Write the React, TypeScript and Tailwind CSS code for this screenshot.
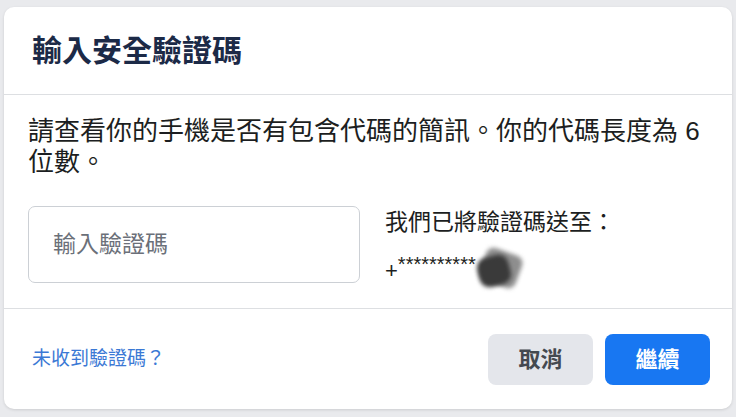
export default function App() {
  return (
    <div
      className="min-h-[417px] w-[736px] bg-[#e9eaed] pt-[7px] px-[4px] pb-[9px]"
      style={{ fontFamily: '"Liberation Sans", "Noto Sans CJK TC", sans-serif' }}
    >
      <div className="bg-white rounded-[10px] shadow-[0_1px_3px_rgba(0,0,0,0.12)] overflow-hidden">
        {/* header */}
        <div className="h-[88px] flex items-center px-[28px] border-b border-[#dddfe2]">
          <h1 className="text-[30px] font-bold text-[#1c2a47] leading-none">輸入安全驗證碼</h1>
        </div>

        {/* body */}
        <div className="px-[24px] pt-[21px] pb-[20px] border-b border-[#dddfe2]">
          <p className="text-[26px] leading-[31px] text-[#1c1e21]">
            請查看你的手機是否有包含代碼的簡訊。你的代碼長度為 6 位數。
          </p>
          <div className="flex gap-[28px] mt-[28px]">
            <div className="w-[332px] h-[77px] shrink-0 border border-[#ccd0d5] rounded-[7px] flex items-center pl-[24px]">
              <span className="text-[23px] text-[#6b7079]">輸入驗證碼</span>
            </div>
            <div className="pt-[2px] -ml-[3px]">
              <p className="text-[23px] leading-[28px] text-[#1c1e21]">我們已將驗證碼送至：</p>
              <div className="flex items-center mt-[12px] h-[40px] text-[#1c1e21]">
                <span className="text-[22px] leading-none mt-[6px]">+</span>
                <span className="text-[20px] leading-none self-start mt-[6px]">**********</span>
                <span className="relative inline-block w-[48px] h-[40px]">
                  <span className="absolute left-[6px] top-[3px] w-[38px] h-[34px] rounded-[8px] bg-[#8e8e8e] rotate-[20deg] blur-[2px]" />
                  <span className="absolute left-[2px] top-[8px] w-[32px] h-[30px] rounded-[10px] bg-[#3a3a3a] -rotate-[15deg] blur-[2px]" />
                </span>
              </div>
            </div>
          </div>
        </div>

        {/* footer */}
        <div className="h-[100px] flex items-center justify-between pl-[28px] pr-[22px]">
          <span className="text-[19px] text-[#3b79d5]">未收到驗證碼？</span>
          <div className="flex gap-[12px]">
            <button className="w-[105px] h-[51px] rounded-[8px] bg-[#e4e6eb] text-[22px] font-semibold text-[#444950]">
              取消
            </button>
            <button className="w-[105px] h-[51px] rounded-[8px] bg-[#1877f2] text-[22px] font-semibold text-white">
              繼續
            </button>
          </div>
        </div>
      </div>
    </div>
  )
}
